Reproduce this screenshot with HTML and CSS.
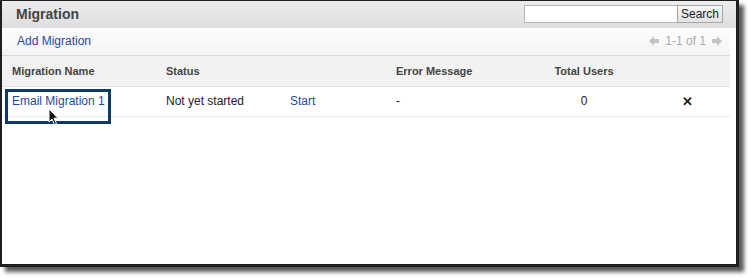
FILE: index.html
```html
<!DOCTYPE html>
<html>
<head>
<meta charset="utf-8">
<link rel="stylesheet" href="styles.css">
</head>
<body>
<div class="frame">
  <div class="content">
    <div class="titlebar">
      <h1 class="title">Migration</h1>
      <div class="search">
        <input class="search-input" type="text">
        <button class="search-btn">Search</button>
      </div>
    </div>
    <div class="toolbar">
      <a class="link add-link" href="#">Add Migration</a>
      <div class="pager">
        <svg class="pager-arrow" width="10" height="10" viewBox="0 0 10 10"><path d="M0 5 L5 0 V3 H10 V7 H5 V10 Z" fill="#c4c4c4"/></svg>
        <span class="pager-text">1-1 of 1</span>
        <svg class="pager-arrow" width="10" height="10" viewBox="0 0 10 10"><path d="M10 5 L5 0 V3 H0 V7 H5 V10 Z" fill="#c4c4c4"/></svg>
      </div>
    </div>
    <table class="grid">
      <thead>
        <tr>
          <th class="c-name">Migration Name</th>
          <th class="c-status">Status</th>
          <th class="c-action"></th>
          <th class="c-error">Error Message</th>
          <th class="c-users">Total Users</th>
          <th class="c-del"></th>
        </tr>
      </thead>
      <tbody>
        <tr>
          <td class="c-name"><a class="link" href="#">Email Migration 1</a></td>
          <td class="c-status">Not yet started</td>
          <td class="c-action"><a class="link" href="#">Start</a></td>
          <td class="c-error">-</td>
          <td class="c-users"><span class="num">0</span></td>
          <td class="c-del"><span class="del">&#x2715;</span></td>
        </tr>
      </tbody>
    </table>
  </div>
  <div class="highlight"></div>
  <svg class="cursor" width="12" height="18" viewBox="0 0 12 18"><path d="M1 1 L1 14 L4 11 L6.5 16.5 L8.5 15.6 L6 10.2 L10 10.2 Z" fill="#111" stroke="#fff" stroke-width="1"/></svg>
</div>
</body>
</html>
```

FILE: styles.css
```css
* { box-sizing: border-box; }
html, body { margin: 0; padding: 0; background: #fff; }
body {
  width: 748px;
  height: 278px;
  font-family: "Liberation Sans", Arial, sans-serif;
  color: #222;
}
.frame {
  position: relative;
  width: 739px;
  height: 267px;
  border-style: solid;
  border-color: #1e1e1e;
  border-width: 1px 3px 3px 2px;
  background: #fff;
  box-shadow: 5px 5px 4px rgba(0,0,0,0.65);
  padding-right: 6px;
}
.content {
  width: 728px;
}
.titlebar {
  height: 27px;
  display: flex;
  align-items: center;
  justify-content: space-between;
  background: linear-gradient(#ececec, #dedede);
  padding: 0 13px 2px 14px;
  margin-right: -6px;
  width: 734px;
}
.title {
  margin: 0;
  font-size: 14px;
  font-weight: bold;
  color: #444;
}
.search {
  display: flex;
  height: 18px;
  margin-top: 1px;
}
.search-input {
  width: 153px;
  height: 18px;
  border: 1px solid #b5b5b5;
  border-right: none;
  background: #fff;
  padding: 0;
  margin: 0;
}
.search-btn {
  height: 18px;
  width: 46px;
  border: 1px solid #a8a8a8;
  background: linear-gradient(#f6f6f6, #e2e2e2);
  font-family: "Liberation Sans", Arial, sans-serif;
  font-size: 12px;
  color: #222;
  padding: 0;
  margin: 0;
}
.toolbar {
  height: 28px;
  display: flex;
  align-items: center;
  justify-content: space-between;
  padding: 0 8px 2px 15px;
  background: linear-gradient(#fdfdfd, #f4f4f4);
  border-bottom: 1px solid #d9d9d9;
}
.link {
  color: #24499a;
  text-decoration: none;
  font-size: 12px;
}
.pager {
  display: flex;
  align-items: center;
  gap: 6px;
  font-size: 12px;
  color: #aaa;
}
.grid {
  width: 728px;
  border-collapse: collapse;
  table-layout: fixed;
  font-size: 12px;
}
.grid th {
  height: 30px;
  background: #f2f2f2;
  text-align: left;
  font-size: 11px;
  font-weight: bold;
  color: #444;
  padding: 0 0 0 10px;
  border-bottom: 1px solid #e2e2e2;
}
.grid td {
  height: 30px;
  padding: 0 0 0 10px;
  border-bottom: 1px solid #ececec;
  color: #222;
}
.c-name { width: 154px; }
.c-status { width: 124px; }
.c-action { width: 106px; }
.c-error { width: 159px; }
.grid .c-users { width: 78px; text-align: center; padding-left: 0; }
.num { color: #222; }
.c-del { width: auto; }
.grid td.c-del { padding-left: 59px; }
.del {
  font-size: 13px;
  font-weight: bold;
  color: #222;
}
.highlight {
  position: absolute;
  left: 3px;
  top: 88px;
  width: 106px;
  height: 35px;
  border: 3px solid #0c3a6a;
}
.cursor {
  position: absolute;
  left: 46px;
  top: 107px;
}
```
